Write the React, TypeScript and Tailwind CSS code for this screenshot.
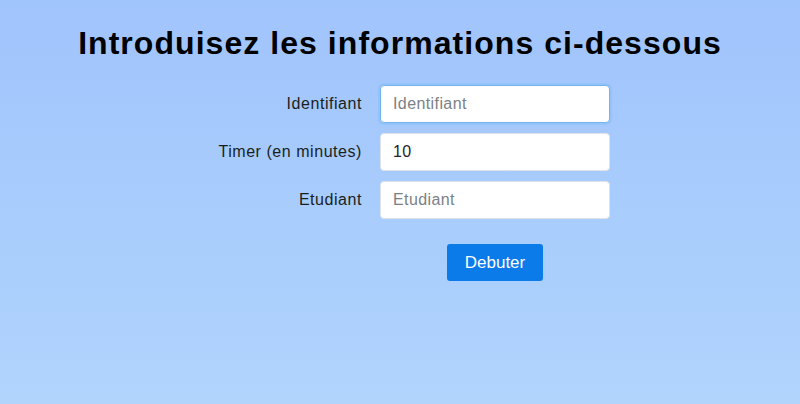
import { useState } from "react";

export default function App() {
  const [identifiant, setIdentifiant] = useState("");
  const [timer, setTimer] = useState("10");
  const [etudiant, setEtudiant] = useState("");

  const inputBase =
    "w-[230px] h-[38px] rounded-[4px] bg-white pl-[12px] pr-3 text-[16px] tracking-[0.4px] text-[#212529] placeholder:text-[#7b8186] outline-none border";

  return (
    <div className="min-h-[404px] w-full bg-gradient-to-b from-[#a0c4fc] to-[#b0d4fc] font-['Liberation_Sans',Arial,sans-serif] text-[#1b1e21]">
      {/* titre */}
      <h1 className="pt-[25px] text-center text-[32px] font-bold leading-[37px] tracking-[1.05px] text-black">
        Introduisez les informations ci-dessous
      </h1>

      {/* formulaire */}
      <form className="mt-[23px] flex flex-col gap-[10px]" onSubmit={(e) => e.preventDefault()}>
        <div className="flex items-center">
          <label className="w-[362px] text-right text-[16px] tracking-[0.55px]">Identifiant</label>
          <input
            className={`${inputBase} ml-[18px] border-[#6fb4ee] shadow-[0_0_0_2px_rgba(120,185,245,0.35)]`}
            placeholder="Identifiant"
            value={identifiant}
            onChange={(e) => setIdentifiant(e.target.value)}
          />
        </div>
        <div className="flex items-center">
          <label className="w-[362px] text-right text-[16px] tracking-[0.55px]">Timer (en minutes)</label>
          <input
            className={`${inputBase} ml-[18px] border-[#dfe3e8]`}
            value={timer}
            onChange={(e) => setTimer(e.target.value)}
          />
        </div>
        <div className="flex items-center">
          <label className="w-[362px] text-right text-[16px] tracking-[0.55px]">Etudiant</label>
          <input
            className={`${inputBase} ml-[18px] border-[#dfe3e8]`}
            placeholder="Etudiant"
            value={etudiant}
            onChange={(e) => setEtudiant(e.target.value)}
          />
        </div>

        <div className="mt-[15px] flex">
          <div className="w-[380px]" />
          <div className="flex w-[230px] justify-center">
            <button
              type="submit"
              className="h-[37px] w-[96px] rounded-[3px] bg-[#0a7be8] text-[17px] text-white"
            >
              Debuter
            </button>
          </div>
        </div>
      </form>
    </div>
  );
}
